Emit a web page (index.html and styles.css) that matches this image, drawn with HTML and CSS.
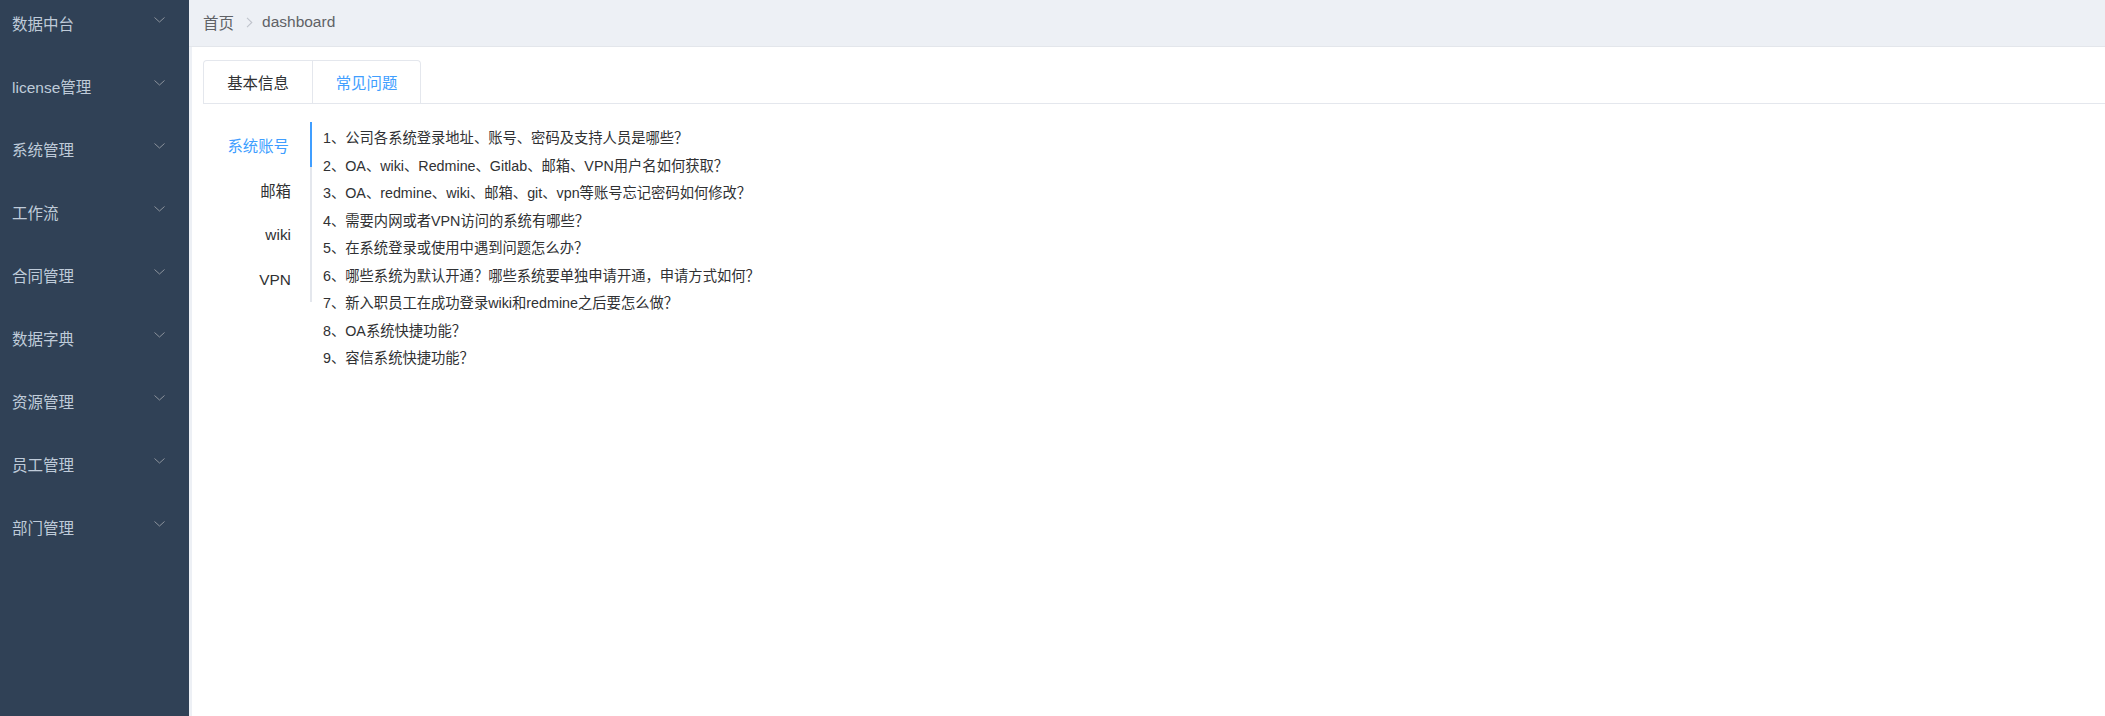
FILE: index.html
```html
<!DOCTYPE html>
<html lang="zh-CN">
<head>
<meta charset="utf-8">
<title>dashboard</title>
<link rel="stylesheet" href="styles.css">
</head>
<body>
<div class="app">
  <aside class="sidebar">
    <ul class="menu">
      <li class="menu-item"><span>数据中台</span><svg class="arrow" width="11" height="6" viewBox="0 0 11 6"><polyline points="0.5,0.5 5.5,5 10.5,0.5" fill="none" stroke="#8c939d" stroke-width="1"/></svg></li>
      <li class="menu-item"><span>license管理</span><svg class="arrow" width="11" height="6" viewBox="0 0 11 6"><polyline points="0.5,0.5 5.5,5 10.5,0.5" fill="none" stroke="#8c939d" stroke-width="1"/></svg></li>
      <li class="menu-item"><span>系统管理</span><svg class="arrow" width="11" height="6" viewBox="0 0 11 6"><polyline points="0.5,0.5 5.5,5 10.5,0.5" fill="none" stroke="#8c939d" stroke-width="1"/></svg></li>
      <li class="menu-item"><span>工作流</span><svg class="arrow" width="11" height="6" viewBox="0 0 11 6"><polyline points="0.5,0.5 5.5,5 10.5,0.5" fill="none" stroke="#8c939d" stroke-width="1"/></svg></li>
      <li class="menu-item"><span>合同管理</span><svg class="arrow" width="11" height="6" viewBox="0 0 11 6"><polyline points="0.5,0.5 5.5,5 10.5,0.5" fill="none" stroke="#8c939d" stroke-width="1"/></svg></li>
      <li class="menu-item"><span>数据字典</span><svg class="arrow" width="11" height="6" viewBox="0 0 11 6"><polyline points="0.5,0.5 5.5,5 10.5,0.5" fill="none" stroke="#8c939d" stroke-width="1"/></svg></li>
      <li class="menu-item"><span>资源管理</span><svg class="arrow" width="11" height="6" viewBox="0 0 11 6"><polyline points="0.5,0.5 5.5,5 10.5,0.5" fill="none" stroke="#8c939d" stroke-width="1"/></svg></li>
      <li class="menu-item"><span>员工管理</span><svg class="arrow" width="11" height="6" viewBox="0 0 11 6"><polyline points="0.5,0.5 5.5,5 10.5,0.5" fill="none" stroke="#8c939d" stroke-width="1"/></svg></li>
      <li class="menu-item"><span>部门管理</span><svg class="arrow" width="11" height="6" viewBox="0 0 11 6"><polyline points="0.5,0.5 5.5,5 10.5,0.5" fill="none" stroke="#8c939d" stroke-width="1"/></svg></li>
    </ul>
  </aside>
  <main class="main">
    <header class="navbar">
      <span class="crumb">首页</span>
      <svg class="crumb-sep" width="7" height="11" viewBox="0 0 7 11"><polyline points="1,0.8 5.8,5.5 1,10.2" fill="none" stroke="#c0c4cc" stroke-width="1.1"/></svg>
      <span class="crumb">dashboard</span>
    </header>
    <section class="content">
      <div class="tabs-header">
        <ul class="tabs-nav">
          <li class="tab">基本信息</li>
          <li class="tab active">常见问题</li>
        </ul>
      </div>
      <div class="tab-body">
        <ul class="vtabs">
          <li class="vtab active">系统账号</li>
          <li class="vtab">邮箱</li>
          <li class="vtab">wiki</li>
          <li class="vtab">VPN</li>
        </ul>
        <ol class="questions">
          <li>1、公司各系统登录地址、账号、密码及支持人员是哪些？</li>
          <li>2、OA、wiki、Redmine、Gitlab、邮箱、VPN用户名如何获取？</li>
          <li>3、OA、redmine、wiki、邮箱、git、vpn等账号忘记密码如何修改？</li>
          <li>4、需要内网或者VPN访问的系统有哪些？</li>
          <li>5、在系统登录或使用中遇到问题怎么办？</li>
          <li>6、哪些系统为默认开通？哪些系统要单独申请开通，申请方式如何？</li>
          <li>7、新入职员工在成功登录wiki和redmine之后要怎么做？</li>
          <li>8、OA系统快捷功能？</li>
          <li>9、容信系统快捷功能？</li>
        </ol>
      </div>
    </section>
  </main>
</div>
</body>
</html>
```
FILE: styles.css
```css
* { box-sizing: border-box; }
html, body { margin: 0; padding: 0; height: 100%; }
body {
  font-family: "Liberation Sans", Arial, "Noto Sans CJK SC", sans-serif;
  background: #fff;
}
ul, ol { list-style: none; margin: 0; padding: 0; }

.app { display: flex; height: 716px; overflow: hidden; }

.sidebar {
  width: 189px;
  flex: 0 0 189px;
  background: #304156;
  overflow: hidden;
}
.menu { margin-top: -9px; }
.menu-item {
  height: 63px;
  display: flex;
  align-items: center;
  justify-content: space-between;
  padding: 0 24px 0 12px;
  color: #bfcbd9;
  font-size: 15.5px;
}
.menu-item .arrow { margin-top: -5px; display: block; }

.main {
  flex: 1;
  display: flex;
  flex-direction: column;
  background: #edf0f5;
  min-width: 0;
}
.navbar {
  height: 47px;
  flex: 0 0 47px;
  display: flex;
  align-items: center;
  padding: 0 0 3px 14px;
  border-bottom: 1px solid #e3e6eb;
  font-size: 15.5px;
  color: #606266;
}
.crumb-sep { margin: 1px 9px 0 12px; display: block; }

.content {
  flex: 1;
  margin-left: 3px;
  background: #fff;
  padding: 13px 0 0 11px;
}

.tabs-header { border-bottom: 1px solid #e4e7ed; }
.tabs-nav {
  display: inline-flex;
  border: 1px solid #e4e7ed;
  border-bottom: none;
  border-radius: 4px 4px 0 0;
  margin-bottom: -1px;
}
.tab {
  width: 108px;
  height: 43px;
  display: flex;
  align-items: center;
  justify-content: center;
  font-size: 15.4px;
  color: #303133;
  border-bottom: 1px solid #e4e7ed;
}
.tab + .tab { border-left: 1px solid #e4e7ed; }
.tab.active { color: #409eff; }

.tab-body {
  display: flex;
  align-items: flex-start;
  padding-top: 18px;
}
.vtabs {
  width: 109px;
  flex: 0 0 109px;
  border-right: 2px solid #e4e7ed;
}
.vtab {
  height: 45px;
  display: flex;
  align-items: center;
  justify-content: flex-end;
  padding-right: 21px;
  font-size: 15.4px;
  color: #303133;
  margin-right: -2px;
}
.vtab.active {
  color: #409eff;
  border-right: 2px solid #409eff;
}
.questions {
  padding: 3px 0 0 11px;
  font-size: 14.3px;
  line-height: 27.5px;
  color: #303133;
}
```
